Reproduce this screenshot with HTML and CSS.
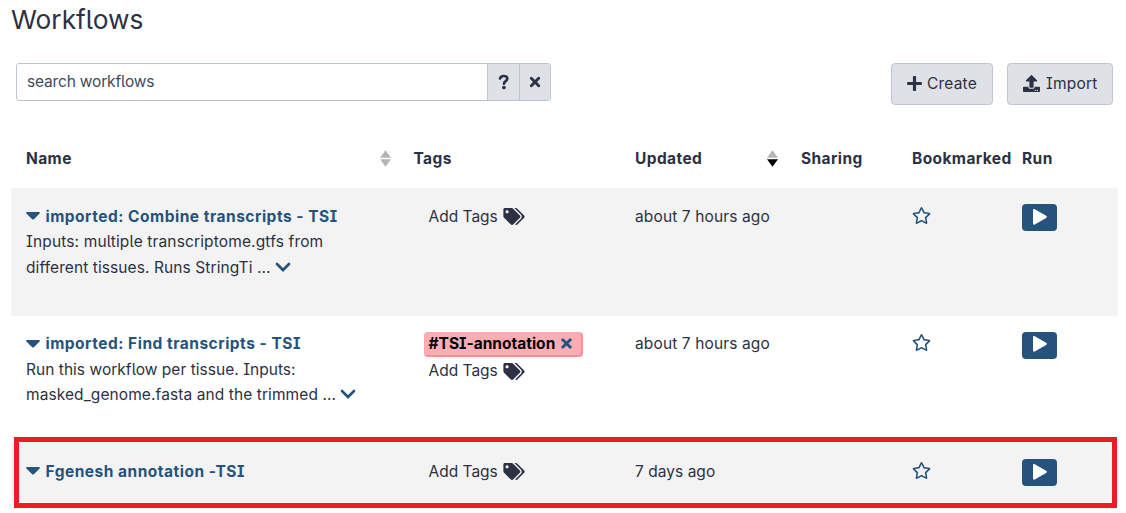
FILE: index.html
```
<!DOCTYPE html>
<html lang="en">
<head>
<meta charset="utf-8">
<title>Workflows</title>
<link rel="stylesheet" href="styles.css">
</head>
<body>
<svg class="defs" aria-hidden="true">
  <symbol id="plus" viewBox="0 0 448 512"><path d="M416 208H272V64c0-17.670-14.330-32-32-32h-32c-17.670 0-32 14.330-32 32v144H32c-17.670 0-32 14.330-32 32v32c0 17.670 14.330 32 32 32h144v144c0 17.670 14.330 32 32 32h32c17.670 0 32-14.330 32-32V304h144c17.670 0 32-14.330 32-32v-32c0-17.670-14.330-32-32-32z"/></symbol>
  <symbol id="upload" viewBox="0 0 512 512"><path d="M296 384h-80c-13.300 0-24-10.700-24-24V192h-87.700c-17.800 0-26.700-21.500-14.100-34.100L242.300 5.700c7.500-7.500 19.800-7.500 27.300 0l152.200 152.200c12.600 12.600 3.700 34.100-14.100 34.100H320v168c0 13.300-10.700 24-24 24zm216-8v112c0 13.300-10.700 24-24 24H24c-13.300 0-24-10.700-24-24V376c0-13.300 10.700-24 24-24h136v8c0 30.900 25.100 56 56 56h80c30.900 0 56-25.100 56-56v-8h136c13.300 0 24 10.700 24 24zm-124 88c0-11-9-20-20-20s-20 9-20 20 9 20 20 20 20-9 20-20zm64 0c0-11-9-20-20-20s-20 9-20 20 9 20 20 20 20-9 20-20z"/></symbol>
  <symbol id="times" viewBox="0 0 12 12"><path d="M2.300 2.300l7.400 7.400M9.700 2.300L2.300 9.700" fill="none" stroke="currentColor" stroke-width="2.900" stroke-linecap="round"/></symbol>
  <symbol id="cross" viewBox="0 0 12 12"><path d="M1.800 1.800l8.400 8.400M10.200 1.800L1.800 10.200" fill="none" stroke="currentColor" stroke-width="2.700"/></symbol>
  <symbol id="question" viewBox="0 0 12 16"><path d="M2 4.400C2.700 2.700 4 2 5.700 2c2.200 0 3.600 1 3.600 2.700C9.300 7.200 6 7 6 9.700" fill="none" stroke="currentColor" stroke-width="2.700" stroke-linecap="round"/><circle cx="5.900" cy="13.500" r="1.850"/></symbol>
  <symbol id="tags" viewBox="0 0 640 512"><path d="M497.941 225.941L286.059 14.059A48 48 0 0 0 252.118 0H48C21.490 0 0 21.490 0 48v204.118a48 48 0 0 0 14.059 33.941l211.882 211.882c18.744 18.745 49.136 18.746 67.882 0l204.118-204.118c18.745-18.745 18.745-49.137 0-67.882zM112 160c-26.510 0-48-21.490-48-48s21.490-48 48-48 48 21.490 48 48-21.490 48-48 48zm513.941 133.823L421.823 497.941c-18.745 18.745-49.137 18.745-67.882 0l-.36-.36L527.640 323.522c16.999-16.999 26.360-39.600 26.360-63.640s-9.362-46.641-26.360-63.640L331.397 0h48.721a48 48 0 0 1 33.941 14.059l211.882 211.882c18.745 18.745 18.745 49.137 0 67.882z"/></symbol>
  <symbol id="star" viewBox="0 0 576 512"><path d="M528.100 171.500L382 150.200 316.700 17.800c-11.700-23.600-45.600-23.900-57.400 0L194 150.200 47.900 171.500c-26.200 3.800-36.700 36.100-17.700 54.600l105.700 103-25 145.500c-4.500 26.300 23.200 46 46.400 33.700L288 439.600l130.700 68.700c23.200 12.200 50.900-7.400 46.400-33.700l-25-145.500 105.700-103c19-18.500 8.500-50.800-17.700-54.600zM388.600 312.300l23.700 138.400L288 385.400l-124.300 65.300 23.700-138.400-100.600-98 139-20.200 62.200-126 62.200 126 139 20.200-100.600 98z"/></symbol>
  <symbol id="play" viewBox="0 0 14 16"><path d="M0 1.200C0 .1 .9-.2 1.800.3L13.100 6.800c1 .6 1 1.500 0 2.100L1.800 15.500C.9 16 0 15.600 0 14.600z"/></symbol>
  <symbol id="caret" viewBox="0 0 14 8"><path d="M1 0h12c.9 0 1.200.8.600 1.400L7.900 7.200c-.5.500-1.200.5-1.700 0L.4 1.400C-.2.800.1 0 1 0z"/></symbol>
  <symbol id="chevron" viewBox="0 0 16 10"><path d="M2 2l6 6 6-6" fill="none" stroke="currentColor" stroke-width="2.700" stroke-linecap="round"/></symbol>
  <symbol id="up" viewBox="0 0 12 8"><path d="M6 0l6 8H0z"/></symbol>
  <symbol id="down" viewBox="0 0 12 8"><path d="M0 0h12L6 8z"/></symbol>
</svg>
<main class="page">
  <h1 class="title">Workflows</h1>
  <div class="toolbar">
    <div class="search">
      <div class="search-input">search workflows</div>
      <button class="search-btn"><svg class="i-question"><use href="#question"/></svg></button>
      <button class="search-btn clear"><svg class="i-times"><use href="#times"/></svg></button>
    </div>
    <div class="actions">
      <button class="btn create"><svg class="i-plus"><use href="#plus"/></svg><span>Create</span></button>
      <button class="btn import"><svg class="i-upload"><use href="#upload"/></svg><span>Import</span></button>
    </div>
  </div>
  <section class="table">
    <div class="row head">
      <div class="sortable"><span>Name</span><span class="sort"><svg><use href="#up"/></svg><svg><use href="#down"/></svg></span></div>
      <div>Tags</div>
      <div class="sortable updated-head"><span>Updated</span><span class="sort desc-order"><svg><use href="#up"/></svg><svg><use href="#down"/></svg></span></div>
      <div>Sharing</div>
      <div>Bookmarked</div>
      <div>Run</div>
    </div>
    <div class="row item shaded">
      <div>
        <div class="name"><svg class="i-caret"><use href="#caret"/></svg><span>imported: Combine transcripts - TSI</span></div>
        <div class="desc"><span class="line wide">Inputs: multiple transcriptome.gtfs from</span><br><span class="line">different tissues. Runs StringTi ...</span><svg class="i-chevron"><use href="#chevron"/></svg></div>
      </div>
      <div><div class="add">Add Tags<svg class="i-tags"><use href="#tags"/></svg></div></div>
      <div class="updated">about 7 hours ago</div>
      <div></div>
      <div><svg class="i-star"><use href="#star"/></svg></div>
      <div><button class="run"><svg class="i-play"><use href="#play"/></svg></button></div>
    </div>
    <div class="row item">
      <div>
        <div class="name"><svg class="i-caret"><use href="#caret"/></svg><span>imported: Find transcripts - TSI</span></div>
        <div class="desc"><span class="line snug">Run this workflow per tissue. Inputs:</span><br><span class="line">masked_genome.fasta and the trimmed ...</span><svg class="i-chevron"><use href="#chevron"/></svg></div>
      </div>
      <div><div class="tag">#TSI-annotation<svg class="i-cross"><use href="#cross"/></svg></div><div class="add">Add Tags<svg class="i-tags"><use href="#tags"/></svg></div></div>
      <div class="updated">about 7 hours ago</div>
      <div></div>
      <div><svg class="i-star"><use href="#star"/></svg></div>
      <div><button class="run"><svg class="i-play"><use href="#play"/></svg></button></div>
    </div>
    <div class="row item last shaded">
      <div><div class="name"><svg class="i-caret"><use href="#caret"/></svg><span>Fgenesh annotation -TSI</span></div></div>
      <div><div class="add">Add Tags<svg class="i-tags"><use href="#tags"/></svg></div></div>
      <div class="updated days">7 days ago</div>
      <div></div>
      <div><svg class="i-star"><use href="#star"/></svg></div>
      <div><button class="run"><svg class="i-play"><use href="#play"/></svg></button></div>
      <div class="highlight"></div>
    </div>
  </section>
</main>
</body>
</html>
```
FILE: styles.css
```
* { box-sizing: border-box; }
body {
  margin: 0;
  background: #fff;
  color: #2c3143;
  font: 15.5px/25.5px Inter, "Noto Sans", sans-serif;
  font-feature-settings: "cv08", "cv05";
}
svg { fill: currentColor; display: block; flex: none; }
.defs { display: none; }
button { font: inherit; color: inherit; padding: 0; font-feature-settings: inherit; }
.page { height: 513px; padding: 0 8px 0 11px; }
.title { margin: 0; padding-top: 4px; height: 63px; font-size: 26.300px; font-weight: 400; line-height: 32px; }
.toolbar { display: flex; justify-content: space-between; align-items: flex-start; padding: 0 5px; height: 65px; }
.search { display: flex; width: 535px; height: 38px; border: 1px solid #bdc6d0; border-radius: 3px; overflow: hidden; }
.search-input { flex: 1; padding: 5px 10px; color: #424a5c; letter-spacing: -.17px; }
.search-btn { width: 32px; border: 0; border-left: 1px solid #bdc6d0; background: #dee2e6; display: grid; place-items: center; }
.clear { width: 31px; }
.i-question { width: 12px; height: 16px; }
.i-times { width: 12px; height: 12px; }
.actions { display: flex; gap: 14px; }
.btn { height: 42px; border: 1px solid #bdc6d0; border-radius: 4px; background: #dee2e6; display: flex; align-items: center; letter-spacing: .2px; padding: 0 15px 2px; gap: 5px; }
.btn span { padding-top: 2px; }
.create { width: 102px; }
.import { width: 106px; gap: 6px; }
.i-plus { width: 15px; height: 17px; }
.i-upload { width: 17px; height: 17px; }
.row { display: grid; grid-template-columns: 387.500px 221.500px 166px 111px 110px 1fr; padding-left: 15px; }
.head { height: 60px; padding-top: 18px; font-weight: 700; letter-spacing: .4px; }
.sortable { display: flex; justify-content: space-between; align-items: flex-start; padding-right: 22.500px; }
.updated-head { padding-right: 23px; }
.sort { display: grid; gap: 1px; padding-top: 4px; color: #b5b5b5; }
.sort svg { width: 11px; height: 8px; }
.desc-order svg:last-child { color: #000; }
.item { height: 127.600px; padding-top: 15.500px; }
.last { height: 58.600px; position: relative; }
.shaded { background: #f3f3f3; }
.name { display: flex; align-items: center; gap: 5.500px; color: #25537b; font-weight: 700; letter-spacing: .5px; white-space: nowrap; }
.i-caret { width: 14px; height: 8px; }
.line { letter-spacing: .09px; }
.wide { letter-spacing: .14px; }
.snug { letter-spacing: .03px; }
.i-chevron { display: inline-block; width: 16px; height: 10px; margin-left: 4px; color: #25537b; vertical-align: 1px; }
.add { display: flex; align-items: center; padding-left: 15px; gap: 5px; }
.i-tags { width: 22px; height: 17px; }
.updated { letter-spacing: .13px; }
.days { letter-spacing: .04px; }
.i-star { width: 19px; height: 17px; margin-top: 3.200px; color: #25537b; }
.run { width: 35px; height: 27px; margin-top: .5px; border: 0; border-radius: 4px; background: #25537b; color: #fff; display: flex; padding: 4.500px 0 0 11px; }
.i-play { width: 14px; height: 16px; }
.tag { display: flex; align-items: center; gap: 5px; width: 159px; height: 25px; margin: .9px 0 1.500px 10px; padding-left: 4px; border: 1px solid #ffa8b1; border-right: 2px solid #ff8c99; border-bottom: 2px solid #ff8c99; border-radius: 4px; background: #ffadb5; color: #000; font-weight: 700; }
.i-cross { width: 13px; height: 13px; color: #25537b; }
.highlight { position: absolute; left: 3px; top: -6px; width: 1103px; height: 71px; border: 5px solid #ed1c24; }
```
